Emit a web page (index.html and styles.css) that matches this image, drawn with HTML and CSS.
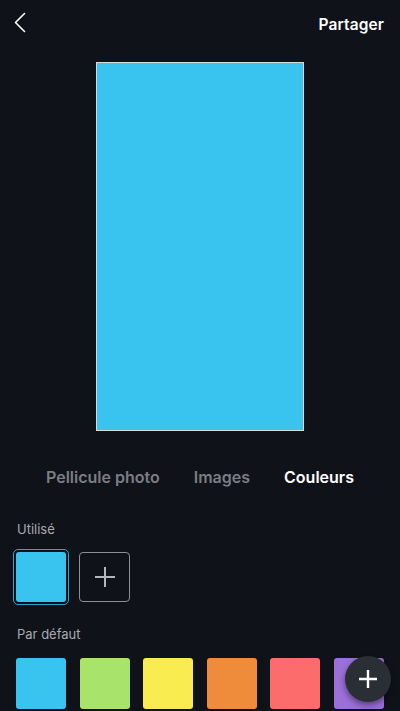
FILE: index.html
```html
<!DOCTYPE html>
<html lang="fr">
<head>
<meta charset="utf-8">
<link rel="stylesheet" href="styles.css">
</head>
<body>
<div class="app">
  <header class="topbar">
    <svg class="back" width="12" height="22" viewBox="0 0 12 22"><path d="M10.5 1.5 L1.5 10.5 L10.5 19.5" fill="none" stroke="#fff" stroke-width="1.6" stroke-linecap="round" stroke-linejoin="round"/></svg>
    <span class="share">Partager</span>
  </header>
  <div class="stage">
    <div class="canvas"></div>
  </div>
  <nav class="tabs">
    <span class="tab">Pellicule photo</span>
    <span class="tab">Images</span>
    <span class="tab active">Couleurs</span>
  </nav>
  <div class="label used-label">Utilisé</div>
  <div class="used-row">
    <div class="selected"><div class="swatch sw-blue"></div></div>
    <div class="add">
      <svg width="22" height="22" viewBox="0 0 22 22"><path d="M11 1 V21 M1 11 H21" stroke="#b4b6ba" stroke-width="2"/></svg>
    </div>
  </div>
  <div class="label default-label">Par défaut</div>
  <div class="default-row">
    <div class="swatch sw-blue"></div>
    <div class="swatch sw-green"></div>
    <div class="swatch sw-yellow"></div>
    <div class="swatch sw-orange"></div>
    <div class="swatch sw-red"></div>
    <div class="swatch sw-purple"></div>
  </div>
  <button class="fab">
    <svg width="20" height="20" viewBox="0 0 20 20"><path d="M10 1 V19 M1 10 H19" stroke="#fff" stroke-width="2.4"/></svg>
  </button>
</div>
</body>
</html>
```
FILE: styles.css
```css
html, body {
  margin: 0;
  padding: 0;
  background: #0f1218;
  height: 711px;
  overflow: hidden;
}
.app {
  position: relative;
  width: 400px;
  height: 711px;
  font-family: Inter, "Noto Sans", sans-serif;
  color: #fff;
}
.topbar {
  height: 48px;
  display: flex;
  align-items: center;
  justify-content: space-between;
  padding: 0 16px 0 14px;
}
.back {
  display: block;
  margin-top: -2px;
}
.share {
  font-size: 15.5px;
  font-weight: 600;
  letter-spacing: 0.1px;
}
.stage {
  display: flex;
  justify-content: center;
  margin-top: 14px;
}
.canvas {
  width: 206px;
  height: 367px;
  background: #38c4ee;
  border: 1px solid #d6dadd;
}
.tabs {
  display: flex;
  justify-content: center;
  gap: 34px;
  margin-top: 34px;
  height: 24px;
  align-items: center;
  font-size: 16px;
  font-weight: 600;
}
.tab {
  color: #7b7e84;
}
.tab.active {
  color: #fff;
}
.label {
  font-size: 13px;
  color: #a9abb0;
  padding-left: 17px;
  line-height: 16px;
}
.used-label {
  margin-top: 32px;
}
.used-row {
  display: flex;
  gap: 10px;
  padding-left: 13px;
  margin-top: 12px;
  align-items: center;
}
.selected {
  width: 56px;
  height: 56px;
  box-sizing: border-box;
  border: 1px solid #2aa6cc;
  border-radius: 5px;
  padding: 2px;
}
.selected .swatch {
  width: 50px;
  height: 50px;
}
.add {
  width: 51px;
  height: 50px;
  box-sizing: border-box;
  border: 1px solid #8c8f94;
  border-radius: 4px;
  display: flex;
  align-items: center;
  justify-content: center;
}
.add svg {
  display: block;
}
.swatch {
  width: 50px;
  height: 51px;
  border-radius: 3px;
}
.sw-blue { background: #38c4ee; }
.sw-green { background: #a8e46c; }
.sw-yellow { background: #f8ec50; }
.sw-orange { background: #ee8c3c; }
.sw-red { background: #fc6c6c; }
.sw-purple { background: #9b70d8; }
.default-label {
  margin-top: 21px;
}
.default-row {
  display: flex;
  justify-content: space-between;
  padding: 0 16px;
  margin-top: 16px;
}
.fab {
  position: absolute;
  left: 345px;
  top: 656px;
  width: 46px;
  height: 46px;
  border-radius: 50%;
  border: none;
  padding: 0;
  background: #2a2f36;
  box-shadow: 0 3px 6px rgba(0, 0, 0, 0.45);
  display: flex;
  align-items: center;
  justify-content: center;
}
.fab svg {
  display: block;
}
```
